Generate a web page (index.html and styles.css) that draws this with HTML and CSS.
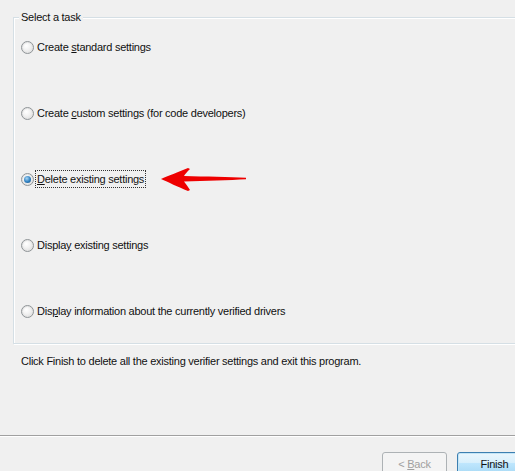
FILE: index.html
```html
<!DOCTYPE html>
<html>
<head>
<meta charset="utf-8">
<link rel="stylesheet" href="styles.css">
</head>
<body>
<div class="page">
  <div class="group">
    <div class="legend">Select a task</div>
    <div class="options">
      <div class="option"><span class="radio"></span><span class="label">Create <u>s</u>tandard settings</span></div>
      <div class="option"><span class="radio"></span><span class="label">Create <u>c</u>ustom settings (for code developers)</span></div>
      <div class="option"><span class="radio checked"></span><span class="label focus"><u>D</u>elete existing settings</span></div>
      <div class="option"><span class="radio"></span><span class="label">Displa<u>y</u> existing settings</span></div>
      <div class="option"><span class="radio"></span><span class="label">Dis<u>p</u>lay information about the currently verified drivers</span></div>
    </div>
  </div>
  <p class="hint">Click Finish to delete all the existing verifier settings and exit this program.</p>
  <div class="separator"></div>
  <div class="buttons">
    <button class="btn disabled">&lt; <u>B</u>ack</button>
    <button class="btn default">Finish</button>
  </div>
  <svg class="arrow" width="90" height="30" viewBox="0 0 90 30">
    <path d="M1,12 C8,9 18,5 28,1 L30,2 C27,5 25,7 24,9 C45,9.5 70,10 86,10.8 L86,12.2 C70,13 45,14 24,14.5 C26,17 28,20 30,23 L28,24 C18,20 8,15 1,12 Z" fill="#ee0000"/>
  </svg>
</div>
</body>
</html>
```
FILE: styles.css
```css
html, body {
  margin: 0;
  padding: 0;
  background: #f0f0f0;
  overflow: hidden;
}
body {
  width: 515px;
  height: 471px;
  font-family: "Liberation Sans", Arial, sans-serif;
  font-size: 11px;
  letter-spacing: -0.25px;
  color: #111;
}
.page {
  position: relative;
  width: 515px;
  height: 471px;
  overflow: hidden;
}
.group {
  margin: 17px 0 0 13px;
  width: 540px;
  padding: 0 0 25px 7px;
  border: 1px solid #d5dfe5;
  box-shadow: 1px 1px 0 #fff, inset 1px 1px 0 #fff;
  box-sizing: border-box;
}
.legend {
  width: fit-content;
  margin: -8px 0 0 -2px;
  padding: 0 2px;
  line-height: 14px;
  background: #f0f0f0;
}
.options {
  display: flex;
  flex-direction: column;
  gap: 52px;
  padding-top: 16px;
}
.option {
  display: flex;
  align-items: center;
  gap: 4px;
  height: 14px;
}
.radio {
  width: 11px;
  height: 11px;
  border-radius: 50%;
  border: 1px solid #8f9497;
  background: radial-gradient(circle at 40% 35%, #ffffff 0%, #f2f2f2 40%, #d8d8d8 100%);
  box-shadow: inset 0 0 0 1px #e4e4e4;
  flex: none;
  position: relative;
}
.radio.checked::after {
  content: "";
  position: absolute;
  left: 2px;
  top: 2px;
  width: 7px;
  height: 7px;
  border-radius: 50%;
  background: radial-gradient(circle at 40% 35%, #a9d6f4 0%, #2d7fc0 55%, #1b4f80 100%);
}
.label {
  line-height: 14px;
  padding: 1px 1px;
  border: 1px solid transparent;
  margin-left: -3px;
}
.label.focus {
  border: 1px dotted #333;
}
.hint {
  margin: 10px 0 0 21px;
  line-height: 14px;
}
.separator {
  margin-top: 67px;
  height: 1px;
  background: #a0a0a0;
  border-bottom: 1px solid #ffffff;
}
.buttons {
  display: flex;
  gap: 10px;
  margin: 15px 0 0 382px;
}
.btn {
  height: 23px;
  font-family: "Liberation Sans", Arial, sans-serif;
  font-size: 11px;
  letter-spacing: -0.25px;
  border-radius: 3px;
  padding: 0;
  flex: none;
}
.btn.disabled {
  width: 65px;
  color: #a0a0a0;
  border: 1px solid #adb2b5;
  background: #f4f4f4;
}
.btn.default {
  width: 75px;
  color: #111;
  border: 1px solid #3c7fb1;
  background: linear-gradient(#eaf6fd 0%, #d9f0fc 45%, #bee6fd 50%, #a7d9f5 100%);
  box-shadow: inset 0 0 0 1px #c4e5f6;
}
.arrow {
  position: absolute;
  left: 160px;
  top: 167px;
}
```
